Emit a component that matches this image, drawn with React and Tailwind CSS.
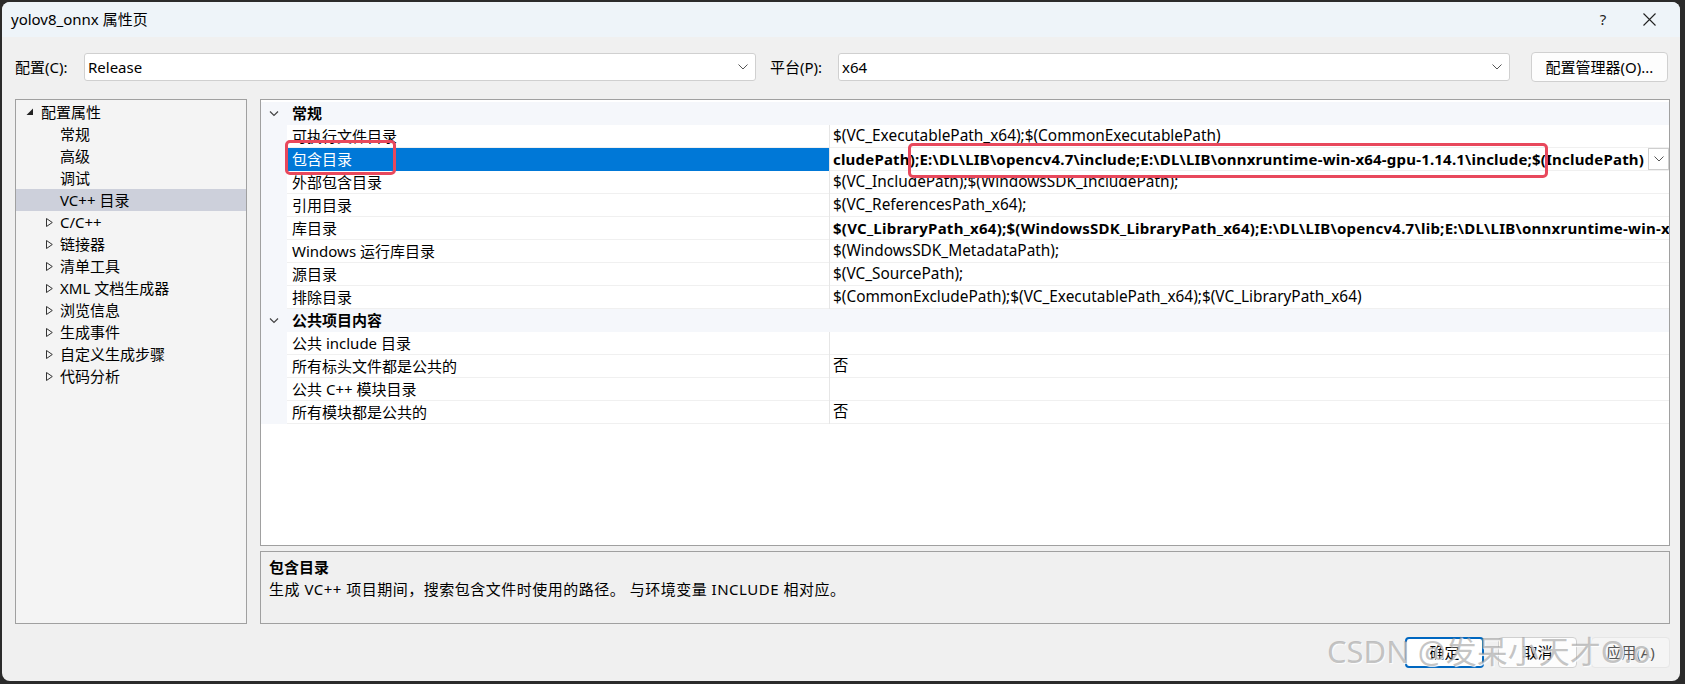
import React from "react";

const FONT = "font-['Noto_Sans','Noto_Sans_CJK_SC',sans-serif]";

function Chevron({ className = "" }) {
  return (
    <svg width="10" height="6" viewBox="0 0 10 6" className={className}>
      <polyline points="0.5,0.5 5,5 9.5,0.5" fill="none" stroke="#555" strokeWidth="1" />
    </svg>
  );
}

function Combo({ value, className = "" }) {
  return (
    <div className={`h-[28px] bg-white border border-[#d0d0d0] rounded-[3px] flex items-center pl-[3px] pr-[7px] ${className}`}>
      <span className="flex-1 text-[15px] text-black">{value}</span>
      <Chevron />
    </div>
  );
}

const tree = [
  { label: "配置属性", level: 0, open: true },
  { label: "常规", level: 1 },
  { label: "高级", level: 1 },
  { label: "调试", level: 1 },
  { label: "VC++ 目录", level: 1, selected: true },
  { label: "C/C++", level: 1, closed: true },
  { label: "链接器", level: 1, closed: true },
  { label: "清单工具", level: 1, closed: true },
  { label: "XML 文档生成器", level: 1, closed: true },
  { label: "浏览信息", level: 1, closed: true },
  { label: "生成事件", level: 1, closed: true },
  { label: "自定义生成步骤", level: 1, closed: true },
  { label: "代码分析", level: 1, closed: true },
];

const general = [
  ["可执行文件目录", "$(VC_ExecutablePath_x64);$(CommonExecutablePath)"],
  ["包含目录", "", "edit"],
  ["外部包含目录", "$(VC_IncludePath);$(WindowsSDK_IncludePath);"],
  ["引用目录", "$(VC_ReferencesPath_x64);"],
  ["库目录", "$(VC_LibraryPath_x64);$(WindowsSDK_LibraryPath_x64);E:\\DL\\LIB\\opencv4.7\\lib;E:\\DL\\LIB\\onnxruntime-win-x64-gpu-1.14.1\\lib;$(LibraryPath)", "bold"],
  ["Windows 运行库目录", "$(WindowsSDK_MetadataPath);"],
  ["源目录", "$(VC_SourcePath);"],
  ["排除目录", "$(CommonExcludePath);$(VC_ExecutablePath_x64);$(VC_LibraryPath_x64)"],
];

const publicItems = [
  ["公共 include 目录", ""],
  ["所有标头文件都是公共的", "否"],
  ["公共 C++ 模块目录", ""],
  ["所有模块都是公共的", "否"],
];

function Header({ label }) {
  return (
    <div className="h-[23px] flex items-center bg-[#f5f7fb]">
      <div className="w-[26px] flex justify-center">
        <svg width="10" height="6" viewBox="0 0 10 6">
          <polyline points="1,0.5 5,4.5 9,0.5" fill="none" stroke="#444" strokeWidth="1.2" />
        </svg>
      </div>
      <span className="pl-[5px] text-[15px] font-bold text-black">{label}</span>
    </div>
  );
}

function Row({ name, value, kind }) {
  const selected = kind === "edit";
  return (
    <div className="h-[23px] flex bg-[#f5f7fb]">
      <div className="w-[26px] shrink-0" />
      <div
        className={`w-[542px] shrink-0 flex items-center pl-[5px] text-[15px] border-b ${
          selected ? "bg-[#0078d7] text-white border-[#0078d7]" : "bg-white text-black border-[#f0f0f0]"
        }`}
      >
        {name}
      </div>
      <div className="w-px shrink-0 bg-[#e6e6e6]" />
      <div className="flex-1 min-w-0 bg-white border-b border-[#f0f0f0] flex items-center overflow-hidden">
        {selected ? (
          <div className="flex-1 min-w-0 flex items-center h-full">
            <span className="flex-1 min-w-0 overflow-hidden whitespace-nowrap pl-[3px] text-[15px] tracking-[0.2px] font-bold text-black">
              cludePath);E:\DL\LIB\opencv4.7\include;E:\DL\LIB\onnxruntime-win-x64-gpu-1.14.1\include;$(IncludePath)
            </span>
            <div className="w-[21px] h-[22px] shrink-0 border border-[#cfcfcf] bg-white flex items-center justify-center">
              <Chevron />
            </div>
          </div>
        ) : (
          <span
            className={`pl-[3px] whitespace-nowrap text-black ${
              kind === "bold" ? "font-bold text-[15px] tracking-[0.25px]" : "text-[15.4px]"
            }`}
          >
            {value}
          </span>
        )}
      </div>
    </div>
  );
}

export default function App() {
  return (
    <div className={`w-[1685px] h-[684px] bg-[#2b2b2b] pt-[2px] pl-[2px] ${FONT}`}>
      <div className="relative w-[1678px] h-[679px] rounded-[8px] bg-[#f0f0f0] overflow-hidden flex flex-col">
        {/* title bar */}
        <div className="h-[35px] shrink-0 bg-[#eef4f9] flex items-center pl-[9px]">
          <span className="flex-1 text-[15px] text-black">yolov8_onnx 属性页</span>
          <span className="w-[20px] text-center text-[15px] text-[#222]">?</span>
          <div className="w-[40px] flex justify-center mr-[11px] ml-[16px]">
            <svg width="13" height="13" viewBox="0 0 13 13">
              <path d="M0.5 0.5 L12.5 12.5 M12.5 0.5 L0.5 12.5" stroke="#222" strokeWidth="1.1" />
            </svg>
          </div>
        </div>

        {/* configuration row */}
        <div className="h-[62px] shrink-0 flex items-start pt-[15px] pl-[13px] pr-[12px]">
          <div className="h-[30px] flex items-center">
            <span className="w-[69px] text-[15px] text-black">配置(C):</span>
            <Combo value="Release" className="w-[672px]" />
            <span className="w-[82px] pl-[14px] text-[15px] text-black">平台(P):</span>
            <Combo value="x64" className="w-[672px]" />
          </div>
          <div className="flex-1" />
          <div className="w-[137px] h-[30px] bg-[#fdfdfd] border border-[#d0d0d0] rounded-[4px] flex items-center justify-center text-[15px] text-black">
            配置管理器(O)...
          </div>
        </div>

        {/* main area */}
        <div className="h-[525px] shrink-0 flex gap-[13px] pl-[13px] pr-[10px]">
          <div className="w-[232px] shrink-0 border border-[#a0a0a0] bg-[#f4f4f4] pt-[1px]">
            {tree.map((t) => (
              <div
                key={t.label}
                className={`h-[22px] flex items-center text-[15px] text-black ${t.selected ? "bg-[#cdd0db]" : ""}`}
              >
                {t.level === 0 ? (
                  <>
                    <svg width="8" height="8" viewBox="0 0 8 8" className="ml-[10px]">
                      <polygon points="7,0.5 7,7 0.5,7" fill="#222" />
                    </svg>
                    <span className="ml-[7px]">{t.label}</span>
                  </>
                ) : t.closed ? (
                  <>
                    <svg width="7" height="9" viewBox="0 0 7 9" className="ml-[30px]">
                      <polygon points="0.5,0.5 6.3,4.5 0.5,8.5" fill="none" stroke="#333" strokeWidth="1" />
                    </svg>
                    <span className="ml-[7px]">{t.label}</span>
                  </>
                ) : (
                  <span className="ml-[44px]">{t.label}</span>
                )}
              </div>
            ))}
          </div>

          <div className="flex-1 min-w-0 flex flex-col gap-[5px]">
            <div className="flex-1 border border-[#a0a0a0] bg-white overflow-hidden pt-[2px]">
              <Header label="常规" />
              {general.map(([n, v, k]) => (
                <Row key={n} name={n} value={v} kind={k} />
              ))}
              <Header label="公共项目内容" />
              {publicItems.map(([n, v]) => (
                <Row key={n} name={n} value={v} />
              ))}
            </div>
            <div className="h-[73px] shrink-0 border border-[#a0a0a0] bg-[#f0f0f0] px-[8px] pt-[4px]">
              <div className="h-[22px] flex items-center text-[15px] font-bold text-black">包含目录</div>
              <div className="h-[23px] flex items-center text-[15px] tracking-[0.5px] text-black">
                生成 VC++ 项目期间，搜索包含文件时使用的路径。 与环境变量 INCLUDE 相对应。
              </div>
            </div>
          </div>
        </div>

        {/* buttons */}
        <div className="h-[57px] shrink-0 flex justify-end items-start pt-[13px] pr-[10px] gap-[14px]">
          <div className="w-[79px] h-[31px] bg-white border-2 border-[#0067c0] rounded-[4px] flex items-center justify-center text-[15px] text-black">
            确定
          </div>
          <div className="w-[79px] h-[31px] bg-[#fdfdfd] border border-[#d0d0d0] rounded-[4px] flex items-center justify-center text-[15px] text-black">
            取消
          </div>
          <div className="w-[79px] h-[31px] bg-[#f5f5f5] border border-[#e6e6e6] rounded-[4px] flex items-center justify-center text-[15px] text-[#555]">
            应用(A)
          </div>
        </div>

        {/* red annotation boxes */}
        <div className="absolute left-[283px] top-[138px] w-[111px] h-[35px] border-[3px] border-[#e8485c] rounded-[5px]" />
        <div className="absolute left-[906px] top-[141px] w-[640px] h-[35px] border-[3px] border-[#e8485c] rounded-[5px]" />

        {/* watermark */}
        <div className="absolute left-[1325px] top-[631px] text-[31px] leading-[36px] text-[rgba(140,140,140,0.5)] whitespace-nowrap [text-shadow:1px_1px_1px_rgba(255,255,255,0.9)]">
          CSDN @发呆小天才O.o
        </div>
      </div>
    </div>
  );
}
